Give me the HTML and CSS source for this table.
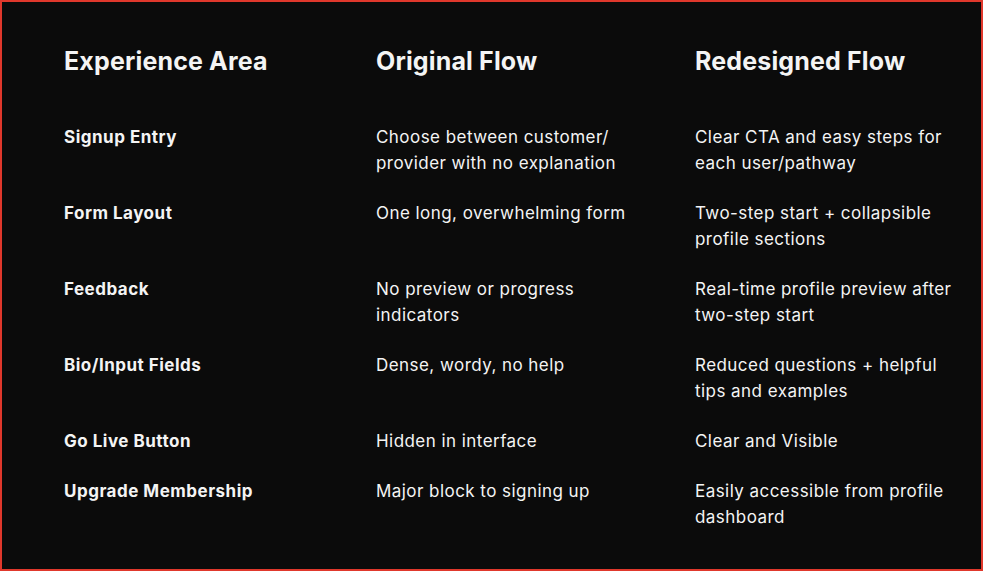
FILE: index.html
```html
<!DOCTYPE html>
<html lang="en">
<head>
    <meta charset="UTF-8">
    <meta name="viewport" content="width=device-width, initial-scale=1.0">
    <title>Signup Flow Comparison</title>
    <link rel="stylesheet" href="styles.css">
</head>
<body>
    <div class="frame">
        <div class="compare">
            <div class="head">Experience Area</div>
            <div class="head">Original Flow</div>
            <div class="head">Redesigned Flow</div>

            <div class="area">Signup Entry</div>
            <div class="cell">Choose between customer/<br>provider with no explanation</div>
            <div class="cell">Clear CTA and easy steps for<br>each user/pathway</div>

            <div class="area">Form Layout</div>
            <div class="cell">One long, overwhelming form</div>
            <div class="cell">Two-step start + collapsible<br>profile sections</div>

            <div class="area">Feedback</div>
            <div class="cell">No preview or progress<br>indicators</div>
            <div class="cell">Real-time profile preview after<br>two-step start</div>

            <div class="area">Bio/Input Fields</div>
            <div class="cell">Dense, wordy, no help</div>
            <div class="cell">Reduced questions + helpful<br>tips and examples</div>

            <div class="area">Go Live Button</div>
            <div class="cell">Hidden in interface</div>
            <div class="cell">Clear and Visible</div>

            <div class="area">Upgrade Membership</div>
            <div class="cell">Major block to signing up</div>
            <div class="cell">Easily accessible from profile<br>dashboard</div>
        </div>
    </div>
</body>
</html>
```

FILE: styles.css
```css
body {
    margin: 0;
    padding: 0;
    background-color: #0b0b0b;
    font-family: Inter, "Open Sans", sans-serif;
    color: #f4f4f4;
}
.frame {
    box-sizing: border-box;
    width: 983px;
    height: 571px;
    border: 2px solid #e0382c;
    background-color: #0b0b0b;
    padding: 41px 0 0 62px;
}
.compare {
    display: grid;
    grid-template-columns: 312px 319px 1fr;
    row-gap: 24px;
}
.head {
    font-size: 25px;
    font-weight: 700;
    line-height: 36px;
    letter-spacing: 0.15px;
    margin-bottom: 21px;
}
.area {
    font-size: 17px;
    font-weight: 700;
    line-height: 26px;
    letter-spacing: 0.5px;
}
.cell {
    font-size: 17px;
    font-weight: 400;
    line-height: 26px;
    letter-spacing: 0.45px;
}
```
